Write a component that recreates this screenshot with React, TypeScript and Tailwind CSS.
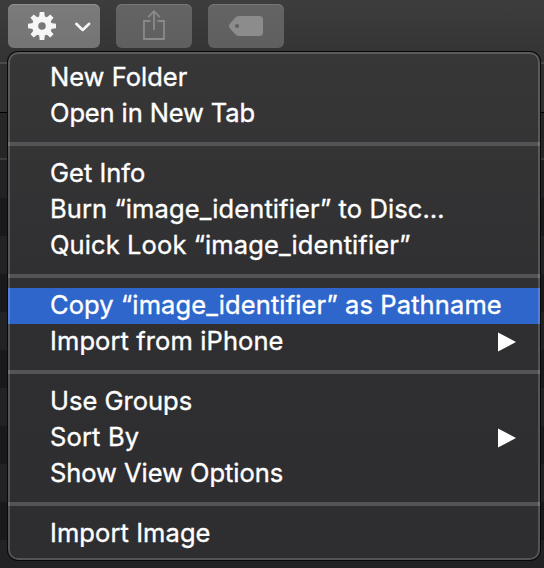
type Item = { label: string; tracking: string; active?: boolean; submenu?: boolean };

const groups: Item[][] = [
  [
    { label: 'New Folder', tracking: 'tracking-[0px]' },
    { label: 'Open in New Tab', tracking: 'tracking-[-0.12px]' },
  ],
  [
    { label: 'Get Info', tracking: 'tracking-[0px]' },
    { label: 'Burn “image_identifier” to Disc…', tracking: 'tracking-[0.1px]' },
    { label: 'Quick Look “image_identifier”', tracking: 'tracking-[0.1px]' },
  ],
  [
    { label: 'Copy “image_identifier” as Pathname', tracking: 'tracking-[0.1px]', active: true },
    { label: 'Import from iPhone', tracking: 'tracking-[0.1px]', submenu: true },
  ],
  [
    { label: 'Use Groups', tracking: 'tracking-[0px]' },
    { label: 'Sort By', tracking: 'tracking-[0.15px]', submenu: true },
    { label: 'Show View Options', tracking: 'tracking-[-0.05px]' },
  ],
  [{ label: 'Import Image', tracking: 'tracking-[0.08px]' }],
];

const teeth = [0, 45, 90, 135, 180, 225, 270, 315];

function Toolbar() {
  return (
    <div className="flex h-[62px] items-start gap-4 bg-linear-to-b from-[#3d3d3e] to-[#333334] px-2 pt-1">
      <button className="h-11 w-[92px] rounded-md bg-linear-to-b from-[#7b7b7c] to-[#747475] shadow-[inset_0_1px_0_#919192]">
        <svg width="92" height="44" viewBox="0 0 92 44" fill="none">
          <g fill="#f6f6f6">
            {teeth.map((a) => (
              <path key={a} d="M31.100 13.500 31.700 8h4.600l.6 5.500z" transform={`rotate(${a} 34 22)`} />
            ))}
          </g>
          <circle cx="34" cy="22" r="6.900" stroke="#f6f6f6" strokeWidth="6.200" />
          <path d="m68.300 19.800 6.400 6.200 6.500-6.200" stroke="#f6f6f6" strokeWidth="2.600" strokeLinecap="round" strokeLinejoin="round" />
        </svg>
      </button>
      <button className="h-11 w-[76px] rounded-md bg-linear-to-b from-[#646465] to-[#5f5f60] shadow-[inset_0_1px_0_#777778]">
        <svg width="76" height="44" viewBox="0 0 76 44" fill="none" stroke="#8a8a8b" strokeWidth="1.8">
          <path d="M34.500 17H28v18h20V17h-6.500M38 26V7.500M32.200 13.200 38 7.200l5.800 6" />
        </svg>
      </button>
      <button className="h-11 w-[76px] rounded-md bg-linear-to-b from-[#646465] to-[#5f5f60] shadow-[inset_0_1px_0_#777778]">
        <svg width="76" height="44" viewBox="0 0 76 44">
          <path fill="#8c8c8d" fillRule="evenodd" d="M31 12h20.500a3.500 3.500 0 0 1 3.500 3.500v13a3.500 3.500 0 0 1-3.500 3.500H31c-1.800 0-3-.8-4.300-2.200l-4.700-5.200c-1.300-1.500-1.300-3.700 0-5.200l4.700-5.200C28 12.800 29.200 12 31 12zM29 19.900a2.100 2.100 0 1 0 0 4.200 2.100 2.100 0 0 0 0-4.200z" />
        </svg>
      </button>
    </div>
  );
}

export default function App() {
  return (
    <div className="relative h-[568px] w-[544px] overflow-hidden bg-[#19191b]">
      <Toolbar />
      <div className="h-[51px] border-t-2 border-b border-t-[#4a4a4b] border-b-black bg-[#303031]" />
      <div className="h-[47px] border-b-2 border-b-[#3b3b3c] bg-[#262627]" />
      <div className="h-[408px] bg-[repeating-linear-gradient(to_bottom,#222224_0px,#222224_38px,#19191b_38px,#19191b_76px)]" />

      <div className="absolute top-[52px] left-2 h-[508px] w-[532px] overflow-hidden rounded-[10px] bg-linear-to-b from-[#373738] via-[#2f2f31] to-[#2e2e30] pt-2 font-['Inter','Noto_Sans',sans-serif] text-[25.5px] font-normal text-white [-webkit-text-stroke:0.35px_white]">
        {groups.map((items, i) => (
          <div key={i}>
            {i > 0 && <div className="my-2.5 h-1 bg-[#545456]" />}
            {items.map((item) => (
              <div
                key={item.label}
                className={`flex h-9 items-center justify-between pr-6 pl-[42px] leading-[34px] ${item.active ? 'bg-[#2f66cb]' : ''}`}
              >
                <span className={`h-9 whitespace-pre ${item.tracking}`}>{item.label}</span>
                {item.submenu && (
                  <svg width="18" height="20" viewBox="0 0 18 20" fill="white">
                    <path d="M0 .5v19L18 10z" />
                  </svg>
                )}
              </div>
            ))}
          </div>
        ))}
      </div>
      <div className="pointer-events-none absolute top-[52px] left-2 h-[508px] w-[532px] rounded-[10px] border-2 border-white/18 shadow-[0_0_0_1px_#080808]" />
    </div>
  );
}
